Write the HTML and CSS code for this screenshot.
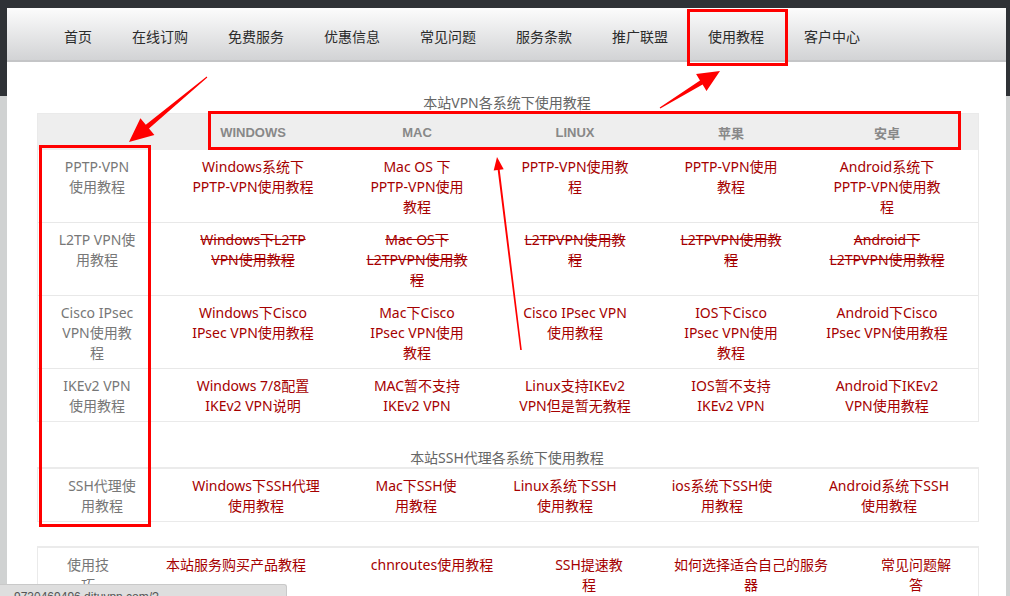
FILE: index.html
```html
<!DOCTYPE html>
<html>
<head>
    <title>使用教程</title>
    <meta charset="utf-8">
    <link rel="stylesheet" href="styles.css">
</head>
<body>
    <div class="page">
        <div class="topnav">
            <a href="#">首页</a>
            <a href="#">在线订购</a>
            <a href="#">免费服务</a>
            <a href="#">优惠信息</a>
            <a href="#">常见问题</a>
            <a href="#">服务条款</a>
            <a href="#">推广联盟</a>
            <a href="#" class="active">使用教程</a>
            <a href="#">客户中心</a>
        </div>

        <div class="content">
            <h3 class="sect-title">本站VPN各系统下使用教程</h3>
            <table class="guide">
                <colgroup>
                    <col class="c0"><col class="c1"><col class="c2"><col class="c3"><col class="c4"><col class="c5">
                </colgroup>
                <tr>
                    <th></th>
                    <th>WINDOWS</th>
                    <th>MAC</th>
                    <th>LINUX</th>
                    <th>苹果</th>
                    <th>安卓</th>
                </tr>
                <tr>
                    <td class="row-head">PPTP·VPN<br>使用教程</td>
                    <td><a href="#">Windows系统下<br>PPTP-VPN使用教程</a></td>
                    <td><a href="#">Mac OS 下<br>PPTP-VPN使用<br>教程</a></td>
                    <td><a href="#">PPTP-VPN使用教<br>程</a></td>
                    <td><a href="#">PPTP-VPN使用<br>教程</a></td>
                    <td><a href="#">Android系统下<br>PPTP-VPN使用教<br>程</a></td>
                </tr>
                <tr>
                    <td class="row-head">L2TP VPN使<br>用教程</td>
                    <td><a href="#" class="del">Windows下L2TP<br>VPN使用教程</a></td>
                    <td><a href="#" class="del">Mac OS下<br>L2TPVPN使用教<br>程</a></td>
                    <td><a href="#" class="del">L2TPVPN使用教<br>程</a></td>
                    <td><a href="#" class="del">L2TPVPN使用教<br>程</a></td>
                    <td><a href="#" class="del">Android下<br>L2TPVPN使用教程</a></td>
                </tr>
                <tr>
                    <td class="row-head">Cisco IPsec<br>VPN使用教<br>程</td>
                    <td><a href="#">Windows下Cisco<br>IPsec VPN使用教程</a></td>
                    <td><a href="#">Mac下Cisco<br>IPsec VPN使用<br>教程</a></td>
                    <td><a href="#">Cisco IPsec VPN<br>使用教程</a></td>
                    <td><a href="#">IOS下Cisco<br>IPsec VPN使用<br>教程</a></td>
                    <td><a href="#">Android下Cisco<br>IPsec VPN使用教程</a></td>
                </tr>
                <tr>
                    <td class="row-head">IKEv2 VPN<br>使用教程</td>
                    <td><a href="#">Windows 7/8配置<br>IKEv2 VPN说明</a></td>
                    <td><a href="#">MAC暂不支持<br>IKEv2 VPN</a></td>
                    <td><a href="#">Linux支持IKEv2<br>VPN但是暂无教程</a></td>
                    <td><a href="#">IOS暂不支持<br>IKEv2 VPN</a></td>
                    <td><a href="#">Android下IKEv2<br>VPN使用教程</a></td>
                </tr>
            </table>

            <h3 class="sect-title ssh-title">本站SSH代理各系统下使用教程</h3>
            <table class="guide ssh">
                <colgroup>
                    <col class="s0"><col class="s1"><col class="s2"><col class="s3"><col class="s4"><col class="s5">
                </colgroup>
                <tr>
                    <td class="row-head">SSH代理使<br>用教程</td>
                    <td><a href="#">Windows下SSH代理<br>使用教程</a></td>
                    <td><a href="#">Mac下SSH使<br>用教程</a></td>
                    <td><a href="#">Linux系统下SSH<br>使用教程</a></td>
                    <td><a href="#">ios系统下SSH使<br>用教程</a></td>
                    <td><a href="#">Android系统下SSH<br>使用教程</a></td>
                </tr>
            </table>

            <table class="guide tips">
                <colgroup>
                    <col class="t0"><col class="t1"><col class="t2"><col class="t3"><col class="t4"><col class="t5">
                </colgroup>
                <tr>
                    <td class="row-head">使用技<br>巧</td>
                    <td><a href="#">本站服务购买产品教程</a></td>
                    <td><a href="#">chnroutes使用教程</a></td>
                    <td><a href="#">SSH提速教<br>程</a></td>
                    <td><a href="#">如何选择适合自己的服务<br>器</a></td>
                    <td><a href="#">常见问题解<br>答</a></td>
                </tr>
            </table>
        </div>
    </div>

    <!-- red marks drawn over the screenshot -->
    <svg class="marks" width="1010" height="596" viewBox="0 0 1010 596">
        <g fill="none" stroke="#ff0000" stroke-width="3">
            <rect x="688.5" y="10.5" width="98" height="54"/>
            <rect x="209.5" y="112.5" width="750" height="36"/>
            <rect x="40.5" y="146.5" width="109" height="379"/>
        </g>
        <g fill="#ff0000">
            <polygon points="207.3,77.4 149,128.5 154.4,135 129,142 140.4,118.2 145.8,124.7 206.7,76.6"/>
            <polygon points="660.3,108.4 702.6,84.6 706.5,91 720,71 696.1,74 700,80.4 659.7,107.6"/>
            <polygon points="521.8,349.9 499.7,169.8 503.7,169.3 497,157 493.7,170.5 497.7,170 520.2,350.1"/>
        </g>
    </svg>

    <div class="statusbar">9730469496.dituvpn.com/?</div>
</body>
</html>
```

FILE: styles.css
```css
* {
    box-sizing: border-box;
    margin: 0;
    padding: 0;
}

html, body {
    height: 100%;
    overflow: hidden;
}

body {
    font-family: "Noto Sans", "Noto Sans CJK SC", sans-serif;
    font-size: 14px;
    background: linear-gradient(#2f3236 0, #2f3236 96px, #d0d2d2 96px);
    padding: 8px 4px 0 7px;
}

.page {
    background: #fff;
    height: 100%;
}

.topnav {
    display: flex;
    height: 54px;
    padding: 19px 0 0 37px;
    background: linear-gradient(#fcfcfc, #d2d3d5);
    border-bottom: 2px solid #c4c5c7;
}

.topnav a {
    padding: 0 20px;
    line-height: 20px;
    color: #2b2b2b;
    text-decoration: none;
}

.content {
    padding: 0 29px 0 30px;
}

.sect-title {
    font-size: 14px;
    font-weight: normal;
    text-align: center;
    color: #666;
    line-height: 20px;
    margin-top: 31px;
}

.ssh-title {
    margin-top: 27px;
    line-height: 18px;
}

table.guide {
    width: 100%;
    table-layout: fixed;
    border-collapse: separate;
    border-spacing: 0;
    border: 1px solid #eaeaea;
}

.c0 { width: 118px; }
.c1 { width: 194px; }
.c2 { width: 134px; }
.c3 { width: 182px; }
.c4 { width: 130px; }
.c5 { width: 182px; }

.s0 { width: 128px; }
.s1 { width: 180px; }
.s2 { width: 140px; }
.s3 { width: 158px; }
.s4 { width: 156px; }
.s5 { width: 178px; }

.t0 { width: 100px; }
.t1 { width: 196px; }
.t2 { width: 196px; }
.t3 { width: 118px; }
.t4 { width: 206px; }
.t5 { width: 124px; }

.guide th {
    height: 36px;
    padding: 0;
    background: #eee;
    color: #888;
    font: bold 13px "Liberation Sans", "Noto Sans CJK SC", sans-serif;
}

.guide td {
    padding: 7px 2px 5px;
    line-height: 20px;
    text-align: center;
    vertical-align: top;
    white-space: nowrap;
    border-bottom: 1px solid #e8e8e8;
}

.guide tr:last-child td {
    border-bottom: none;
}

.guide td.row-head {
    color: #777;
}

.guide a {
    color: #a50000;
    text-decoration: none;
}

.guide a.del {
    text-decoration: line-through;
}

table.ssh,
table.tips {
    border-top: 2px solid #ebebeb;
}

table.tips {
    margin-top: 24px;
}

.marks {
    position: absolute;
    top: 0;
    left: 0;
    pointer-events: none;
}

.statusbar {
    position: fixed;
    left: 0;
    bottom: 0;
    width: 287px;
    height: 12px;
    overflow: hidden;
    padding-left: 14px;
    background: #dedede;
    border-top: 1px solid #c9c9c9;
    border-right: 1px solid #c9c9c9;
    border-top-right-radius: 3px;
    color: #555;
    font: 12px/18px "Liberation Sans", sans-serif;
    padding-top: 3px;
}
```
